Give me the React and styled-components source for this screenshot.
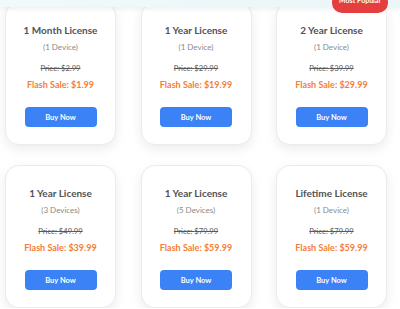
import React from 'react';
import styled, { createGlobalStyle } from 'styled-components';

const plans = [
  { title: '1 Month License', devices: '(1 Device)', price: '$2.99', sale: '$1.99' },
  { title: '1 Year License', devices: '(1 Device)', price: '$29.99', sale: '$19.99' },
  { title: '2 Year License', devices: '(1 Device)', price: '$39.99', sale: '$29.99', popular: true },
  { title: '1 Year License', devices: '(3 Devices)', price: '$49.99', sale: '$39.99' },
  { title: '1 Year License', devices: '(5 Devices)', price: '$79.99', sale: '$59.99' },
  { title: 'Lifetime License', devices: '(1 Device)', price: '$79.99', sale: '$59.99' },
];

const GlobalStyle = createGlobalStyle`
  html, body {
    margin: 0;
    padding: 0;
    background: #ffffff;
    font-family: Lato, 'Noto Sans', 'Liberation Sans', sans-serif;
    overflow: hidden;
  }
`;

function PlanCard({ title, devices, price, sale, popular }) {
  return (
    <Card>
      {popular && <Badge>Most Popular</Badge>}
      <Title>{title}</Title>
      <Devices>{devices}</Devices>
      <OldPrice>Price: {price}</OldPrice>
      <SalePrice>Flash Sale: {sale}</SalePrice>
      <BuyButton>Buy Now</BuyButton>
    </Card>
  );
}

export default function App() {
  return (
    <>
      <GlobalStyle />
      <TopBar />
      <Grid>
        {plans.map((plan, i) => (
          <PlanCard key={i} {...plan} />
        ))}
      </Grid>
    </>
  );
}

const TopBar = styled.header`
  position: fixed;
  top: 0;
  left: 0;
  right: 0;
  height: 7px;
  background: linear-gradient(90deg, #f1f9fa, #eaf6f8);
  box-shadow: 0 2px 5px rgba(0, 0, 0, 0.07);
  z-index: 10;
`;

const Grid = styled.main`
  display: grid;
  grid-template-columns: repeat(3, 111px);
  column-gap: 24.5px;
  row-gap: 20px;
  padding: 2px 0 0 5px;
`;

const Card = styled.div`
  position: relative;
  box-sizing: border-box;
  height: 143px;
  display: flex;
  flex-direction: column;
  align-items: center;
  padding-top: 20px;
  background: #ffffff;
  border: 1px solid #ececec;
  border-radius: 14px;
  box-shadow: 0 4px 12px rgba(0, 0, 0, 0.08);
`;

const Badge = styled.span`
  position: absolute;
  top: -11px;
  right: -2px;
  z-index: 20;
  padding: 3px 7px 7px;
  border-radius: 10px;
  background: #e53e3e;
  color: #ffffff;
  font-size: 7px;
  font-weight: 700;
  line-height: 11px;
  white-space: nowrap;
`;

const Title = styled.h3`
  margin: 0;
  font-size: 10px;
  line-height: 15px;
  font-weight: 700;
  color: #505357;
`;

const Devices = styled.p`
  margin: 3px 0 0;
  font-size: 8px;
  line-height: 12px;
  color: #8a8a8a;
`;

const OldPrice = styled.p`
  margin: 9px 0 0;
  font-size: 7.6px;
  line-height: 12px;
  color: #5a5a5a;
  text-decoration: line-through;
`;

const SalePrice = styled.p`
  margin: 4px 0 0;
  font-size: 9px;
  line-height: 14px;
  font-weight: 700;
  color: #f67d36;
`;

const BuyButton = styled.button`
  margin-top: 15px;
  width: 72px;
  height: 20px;
  border: none;
  border-radius: 4px;
  background: #3b82f6;
  color: #ffffff;
  font-family: inherit;
  font-size: 7.5px;
  font-weight: 700;
  cursor: pointer;
`;
